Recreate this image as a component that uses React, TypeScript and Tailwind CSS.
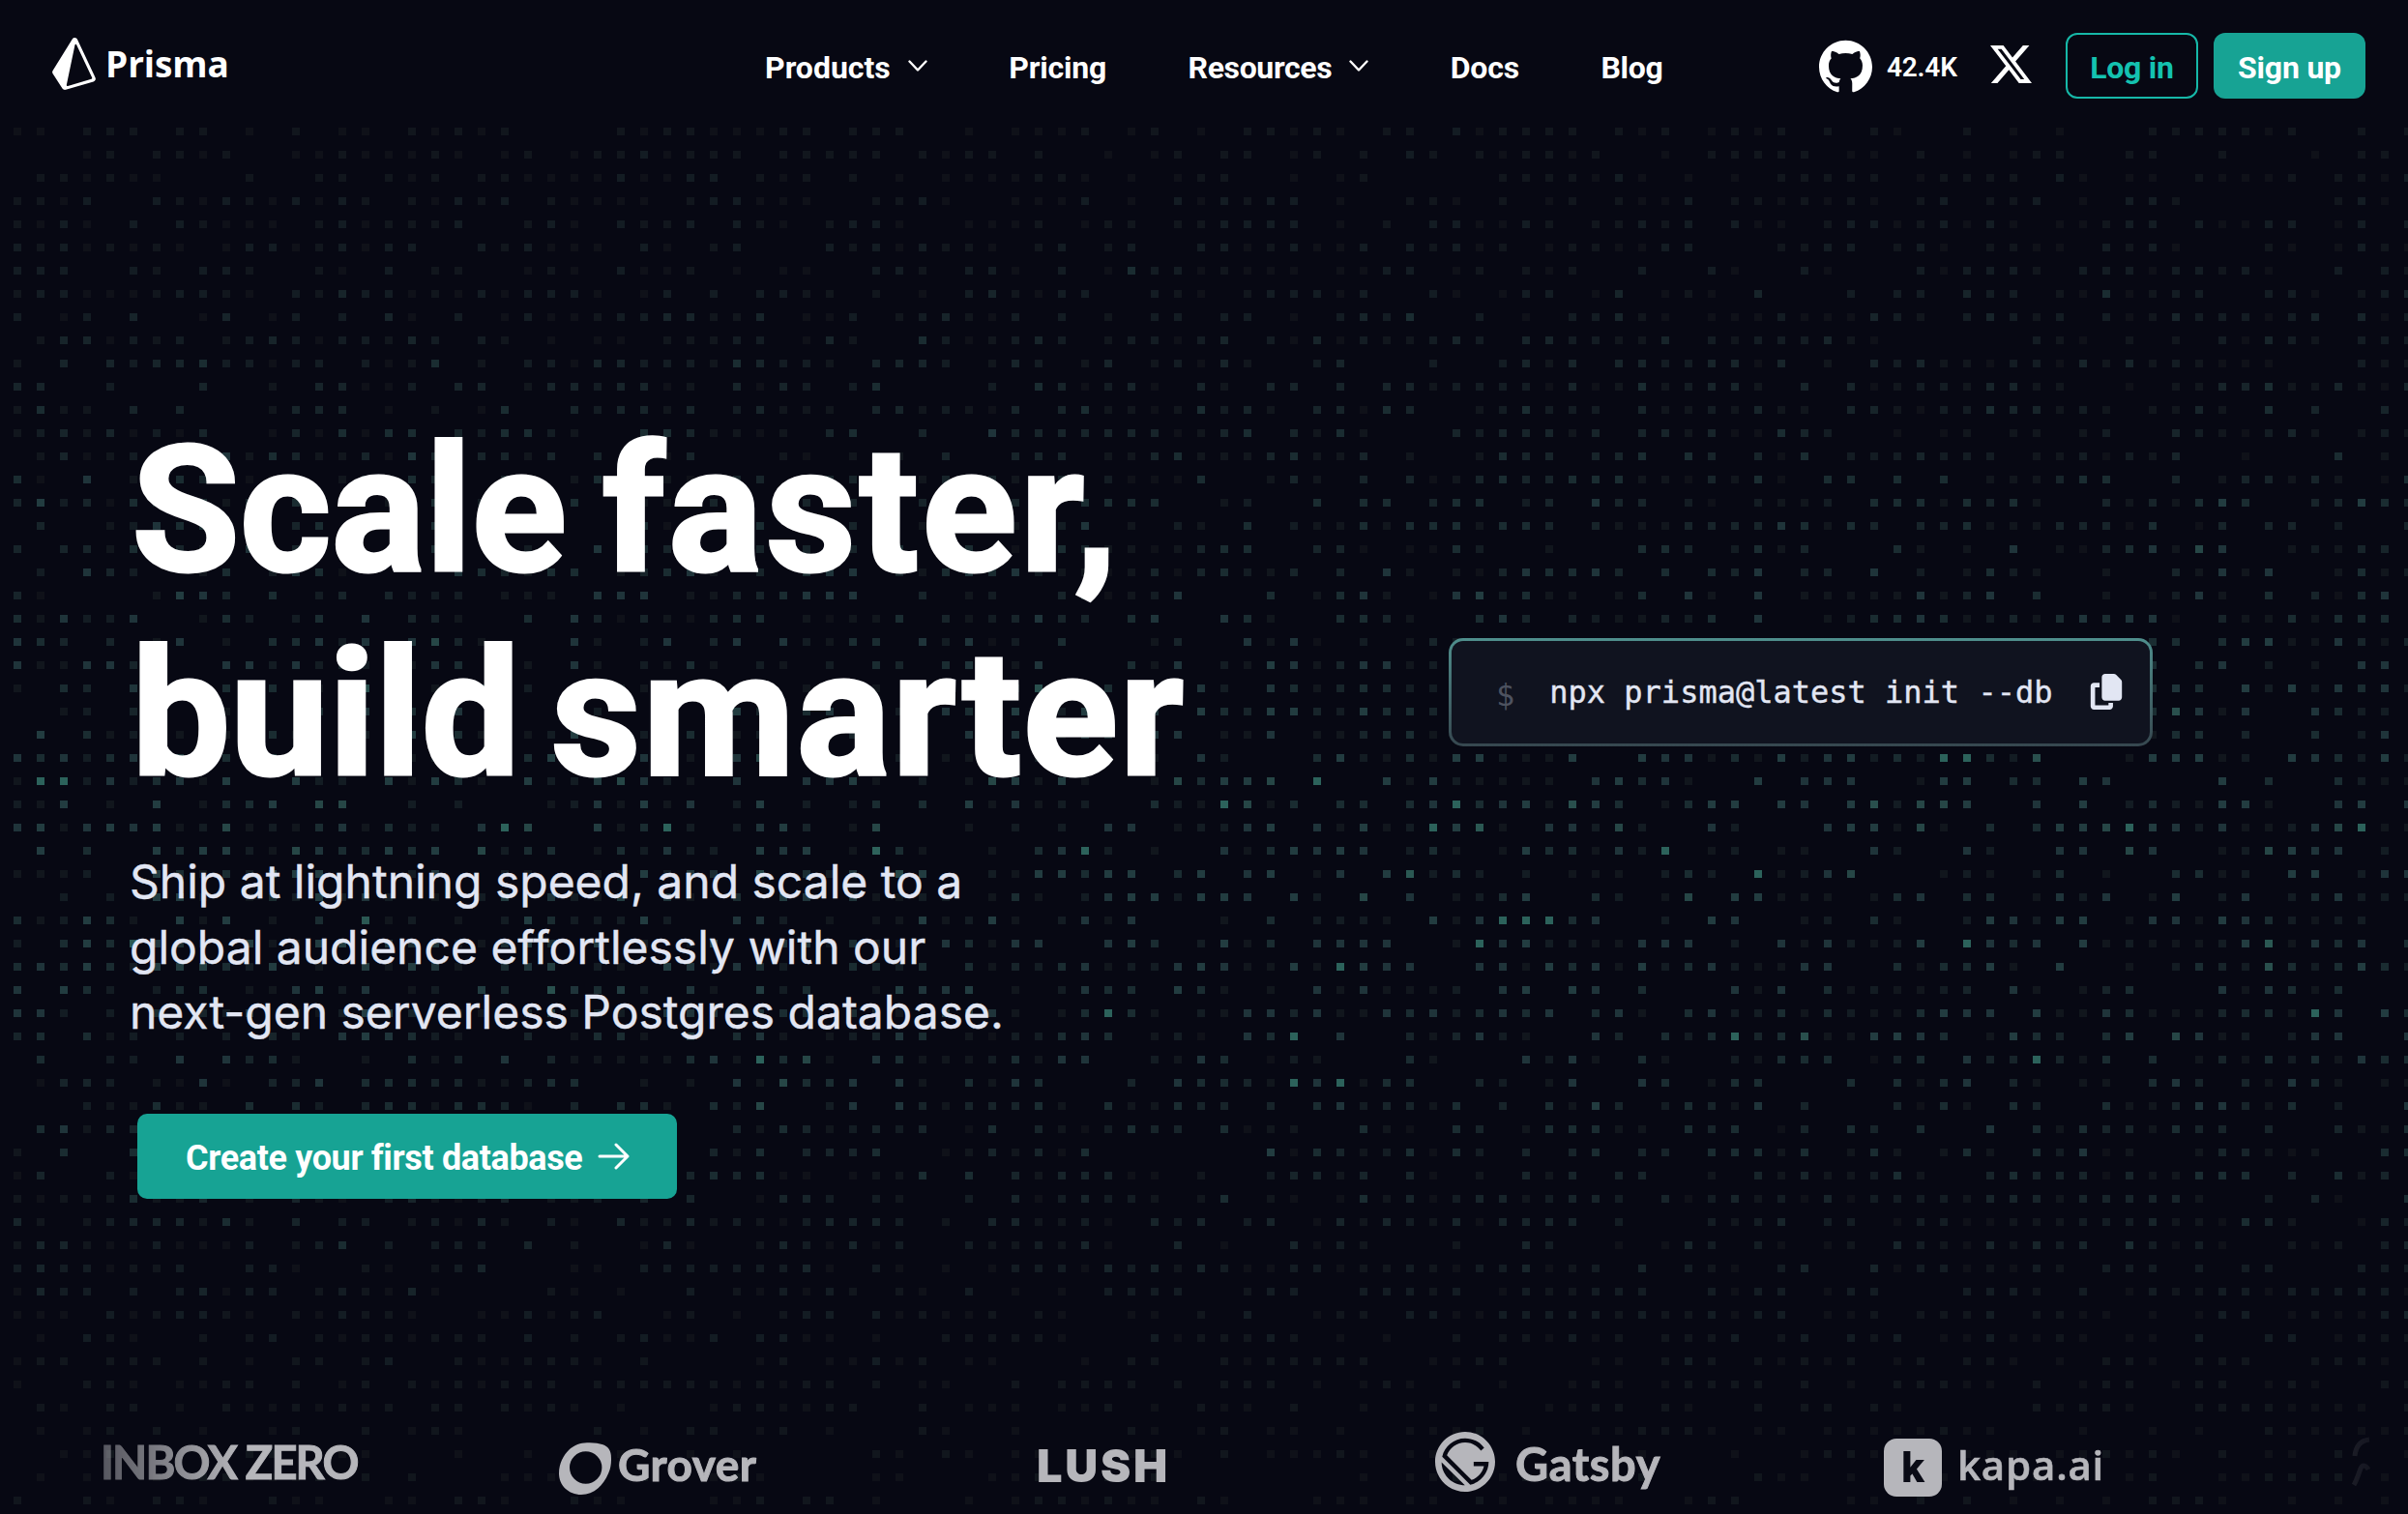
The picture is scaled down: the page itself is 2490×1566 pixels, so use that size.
import React from "react";
import { FaCopy } from "react-icons/fa6";

const PITCH = 24;
const COLS = 104;
const ROWS = 65;

/* column,row cells of the brightest dots */
const BRIGHT: [number, number][] = [
  [1, 33], [2, 33], [21, 35], [28, 35], [46, 36], [75, 37], [64, 39], [65, 39], [66, 39],
  [83, 32], [84, 32], [84, 40], [61, 35], [62, 34], [63, 40], [56, 33], [52, 34], [57, 41],
  [32, 45], [47, 43], [55, 44], [55, 46], [57, 46], [91, 35], [99, 43], [87, 45], [101, 35],
  [71, 36], [74, 44],
];

function buildDots() {
  let s = 20477;
  const rnd = () => {
    s = (s * 1103515245 + 12345) % 2147483648;
    return s / 2147483648;
  };
  const levels: string[] = Array(12).fill("");
  for (let r = 5; r < ROWS; r++) {
    const y = 12 + r * PITCH;
    const env = y < 850 ? Math.pow(y / 850, 0.8) : Math.max(0.16, 1 - Math.pow((y - 850) / 690, 1.5));
    for (let c = 0; c < COLS; c++) {
      const v = rnd();
      const w = rnd();
      let a = 0;
      if (v > 0.985) a = 0.62 + w * 0.25;
      else if (v > 0.55) a = 0.36 + w * 0.26;
      else if (v > 0.25) a = 0.09 + w * 0.17;
      const idx = Math.min(11, Math.floor(a * env * 12));
      if (a * env > 0.03) levels[idx] += `M${14 + c * PITCH} ${y}h8v8h-8z`;
    }
  }
  return levels;
}

const DOTS = buildDots();
const DOT_FILL = [
  "#0f1119", "#11161d", "#131c23", "#17242a", "#1a2c31", "#1f343a",
  "#223c40", "#264646", "#294f4d", "#2b5853", "#2e625b", "#306b62",
];

function DotField() {
  return (
    <svg className="absolute inset-0 h-full w-full" viewBox="0 0 2490 1566" aria-hidden="true">
      {DOTS.map((d, i) => (
        <path key={i} d={d} fill={DOT_FILL[i]} />
      ))}
      <path d={BRIGHT.map(([c, r]) => `M${14 + c * PITCH} ${12 + r * PITCH}h8v8h-8z`).join("")} fill="#2c625b" />
    </svg>
  );
}

function Chevron() {
  return (
    <svg className="-mt-[3px] ml-[18px] h-[13px] w-[20px]" viewBox="0 0 20 13" fill="none" stroke="#fff" strokeWidth="2.4" strokeLinecap="round" strokeLinejoin="round">
      <path d="M1.500 1.500l8.500 9 8.500-9" />
    </svg>
  );
}

function Header() {
  return (
    <header className="flex h-[136px] items-center pl-[54px] pr-11 font-[Roboto] text-[32px] font-bold leading-[38px] text-white">
      <a className="flex w-[737px] items-center">
        <svg className="-mt-1 h-[54px] w-[45px]" viewBox="2 0 20 24" fill="#fff">
          <path d="M21.8068 18.2848L13.5528.7565c-.207-.4382-.639-.7273-1.1286-.7541-.5023-.0293-.9523.213-1.2062.6253L2.266 15.1271c-.2773.4518-.2718 1.0091.0158 1.4555l4.3759 6.7786c.2608.4046.7127.6388 1.1823.6388.1332 0 .267-.0188.3987-.0577l12.7019-3.7568c.3891-.1151.7072-.3904.8737-.7553s.1633-.7828-.0075-1.1454zm-1.8481.7519L9.1814 22.2242c-.3292.0975-.6448-.1873-.5756-.5194l3.8501-18.4386c.072-.3448.5486-.3996.699-.0803l7.1288 15.138c.1344.2856-.019.6224-.325.7128z" />
        </svg>
        <span className="ml-[10px] pb-[5px] font-['Open_Sans'] text-[37px] font-bold leading-[44px] tracking-[-0.1px]">Prisma</span>
      </a>
      <nav className="flex w-[1090px] items-center gap-[84.5px] pt-[3px]">
        <a className="flex items-center">Products<Chevron /></a>
        <a className="tracking-[-0.2px]">Pricing</a>
        <a className="flex items-center tracking-[-0.38px]">Resources<Chevron /></a>
        <a className="tracking-[-0.18px]">Docs</a>
        <a className="tracking-[-0.3px]">Blog</a>
      </nav>
      <a className="flex w-[177px] items-center">
        <svg className="h-[55px] w-[55px] shrink-0" viewBox="0 0 24 24" fill="#fff">
          <path d="M12 .297c-6.63 0-12 5.373-12 12 0 5.303 3.438 9.8 8.205 11.385.6.113.82-.258.82-.577 0-.285-.01-1.04-.015-2.04-3.338.724-4.042-1.61-4.042-1.61C4.422 18.07 3.633 17.7 3.633 17.7c-1.087-.744.084-.729.084-.729 1.205.084 1.838 1.236 1.838 1.236 1.07 1.835 2.809 1.305 3.495.998.108-.776.417-1.305.76-1.605-2.665-.3-5.466-1.332-5.466-5.93 0-1.31.465-2.38 1.235-3.22-.135-.303-.54-1.523.105-3.176 0 0 1.005-.322 3.3 1.23.96-.267 1.98-.399 3-.405 1.02.006 2.04.138 3 .405 2.28-1.552 3.285-1.23 3.285-1.23.645 1.653.24 2.873.12 3.176.765.84 1.23 1.91 1.23 3.22 0 4.61-2.805 5.625-5.475 5.92.42.36.81 1.096.81 2.22 0 1.606-.015 2.896-.015 3.286 0 .315.21.69.825.57C20.565 22.092 24 17.592 24 12.297c0-6.627-5.373-12-12-12" />
        </svg>
        <span className="ml-[15px] pt-[3px] text-[28px] font-semibold tracking-[-0.2px]">42.4K</span>
      </a>
      <svg className="-mt-1 h-[43px] w-[43px] shrink-0" viewBox="0 0 24 24" fill="#fff">
        <path d="M18.901 1.153h3.68l-8.04 9.19L24 22.846h-7.406l-5.8-7.584-6.638 7.584H.474l8.6-9.83L0 1.154h7.594l5.243 6.932ZM17.61 20.644h2.039L6.486 3.24H4.298Z" />
      </svg>
      <a className="ml-[35px] flex h-[68px] w-[137px] shrink-0 items-center justify-center rounded-xl border-2 border-[#16b8a8] pt-[3px] tracking-[-0.22px] text-[#14c2b0]">Log in</a>
      <a className="ml-4 flex h-[68px] w-[157px] shrink-0 items-center justify-center rounded-xl bg-[#17a394] pt-[3px] tracking-[-0.21px]">Sign up</a>
    </header>
  );
}

function Hero() {
  return (
    <main className="flex h-[1330px] items-start pl-[134px]">
      <section className="w-[1364px] pt-[286px]">
        <h1 className="whitespace-nowrap pl-[2px] font-[Roboto] text-[182px] font-bold leading-[211px] text-white [-webkit-text-stroke:3px_#fff]">
          <span className="block tracking-[-0.2px]">
            Scale <span className="ml-[-8px] tracking-[3.2px]">faster,</span>
          </span>
          <span className="block tracking-[-0.3px]">
            build <span className="ml-[-13px] tracking-[1.4px]">smarter</span>
          </span>
        </h1>
        <p className="mt-[34px] font-[Inter] text-[48px] leading-[67.5px] text-[#e2e6f3] [-webkit-text-stroke:0.4px_#e2e6f3]">
          Ship at lightning speed, and scale to a<br />
          global audience effortlessly with our<br />
          next-gen serverless Postgres database.
        </p>
        <button className="ml-2 mt-[71px] flex h-[88px] w-[558px] items-center rounded-[10px] bg-[#17a394] pl-[50px] pt-1 font-[Roboto] text-[36px] font-bold leading-[42px] tracking-[-0.36px] text-white">
          Create your first database
          <svg className="-mt-1 ml-4 h-[28px] w-[33px]" viewBox="0 0 33 28" fill="none" stroke="#fff" strokeWidth="3" strokeLinecap="round" strokeLinejoin="round">
            <path d="M2 14h29M19 2l12 12-12 12" />
          </svg>
        </button>
      </section>
      <div className="mt-[524px] h-[112px] w-[728px] rounded-[15px] bg-linear-to-b from-[#4f8f8d] to-[#36474f] p-[3px]">
        <div className="flex h-full items-center rounded-xl bg-[#10131f] font-['DejaVu_Sans_Mono'] text-[32px] leading-[40px] text-[#e2e6f3]">
          <span className="ml-[46px] pt-[6px] text-[#4d525f]">$</span>
          <span className="ml-[36px] whitespace-pre [-webkit-text-stroke:0.4px_#e2e6f3]">npx prisma@latest init --db</span>
          <FaCopy className="-mt-[2px] ml-auto mr-[28px] h-[37px] w-[34px]" />
        </div>
      </div>
    </main>
  );
}

function LogoStrip() {
  return (
    <footer className="grid h-[100px] grid-cols-[474px_494px_412px_464px_484px_1fr] items-center overflow-hidden pl-[104px] text-[#b6b6bb] mask-[linear-gradient(to_right,rgba(0,0,0,0.05)_0,black_249px,black_2241px,transparent_100%)]">
      <span className="whitespace-nowrap pb-[9px] font-[Lato] text-[47px] font-bold leading-[56px] tracking-[-1.83px] [-webkit-text-stroke:1px_#b6b6bb]">INBOX ZERO</span>
      <div className="flex items-center">
        <svg className="mt-[6px] h-[54px] w-[54px]" viewBox="0 0 54 54" fill="#b6b6bb" fillRule="evenodd">
          <path d="M29 .2C35-.1 41 .6 45.500 2.200C50.500 4 53.200 7.500 53.800 13C54.300 19 54 25 51.500 31C46.500 43.500 37 54 23 54C10 54 0 44.500 0 32C0 22 4.500 13 11 7C16 2.500 22 .500 29 .2ZM27.700 9.300a16.700 16.700 0 1 0 0 33.400a16.700 16.700 0 1 0 0-33.400Z" />
        </svg>
        <span className="ml-[7px] pb-[2px] font-[Lato] text-[46px] font-bold leading-[56px] tracking-[0.5px] [-webkit-text-stroke:1px_#b6b6bb]">Grover</span>
      </div>
      <span className="font-[Inter] text-[47px] font-black leading-[56px] tracking-[2.7px]">LUSH</span>
      <div className="flex items-center">
        <svg className="-mt-2 h-[62px] w-[62px]" viewBox="0 0 24 24" fill="#b6b6bb">
          <path d="M12 0C5.4 0 0 5.4 0 12s5.400 12 12 12 12-5.400 12-12S18.600 0 12 0zm0 2.571c3.171 0 5.915 1.460 7.629 3.858l-1.286 1.115C16.886 5.572 14.571 4.286 12 4.286c-3.343 0-6.171 2.143-7.286 5.143l9.857 9.857c2.486-.857 4.373-3 4.973-5.572h-4.115V12h6c0 4.457-3.172 8.228-7.372 9.170L2.830 9.944C3.772 5.743 7.543 2.570 12 2.570zm-9.429 9.600l9.344 9.258c-2.400-.086-4.801-.943-6.601-2.743-1.800-1.800-2.743-4.201-2.743-6.515z" />
        </svg>
        <span className="ml-[21px] pb-[5px] font-[Lato] text-[47px] font-bold leading-[56px] tracking-[0.6px] [-webkit-text-stroke:1px_#b6b6bb]">Gatsby</span>
      </div>
      <div className="flex items-center">
        <span className="mt-[4px] flex h-[60px] w-[60px] items-center justify-center rounded-[13px] bg-[#b6b6bb] font-[Roboto] text-[43px] font-black leading-[60px] text-[#0a0b15]">k</span>
        <span className="ml-[16px] pb-[3px] font-['Open_Sans'] text-[42px] font-semibold leading-[56px] tracking-[0.8px] [-webkit-text-stroke:0.6px_#b6b6bb]">kapa.ai</span>
      </div>
      <svg className="-mt-1 h-[56px] w-[40px] opacity-50" viewBox="0 0 40 56" fill="none" stroke="#b6b6bb" strokeWidth="5">
        <path d="M3 20C4 10 9 4 18 3M2 50C5 45 7 38 9 33c2-5 6-3 8 1" />
      </svg>
    </footer>
  );
}

export default function App() {
  return (
    <div className="relative h-[1566px] w-[2490px] overflow-hidden bg-[#070813]">
      <DotField />
      <div className="relative">
        <Header />
        <Hero />
        <LogoStrip />
      </div>
    </div>
  );
}
